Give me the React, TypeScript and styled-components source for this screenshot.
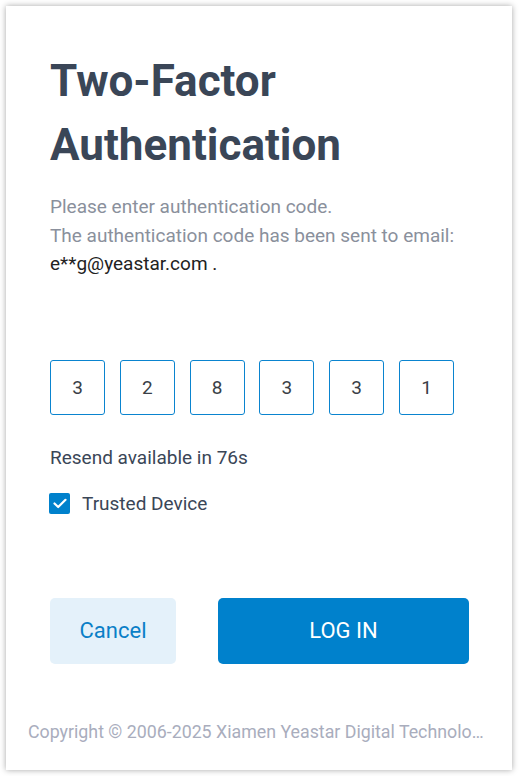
import React from "react";
import styled, { createGlobalStyle } from "styled-components";

const Global = createGlobalStyle`
  html, body { margin: 0; padding: 0; background: #ffffff; }
  body { font-family: Roboto, "Liberation Sans", sans-serif; }
  * { box-sizing: border-box; }
`;

const Page = styled.div`
  padding: 6px 7px 6px 6px;
  width: 519px;
`;

const Card = styled.div`
  width: 506px;
  height: 764px;
  background: #fff;
  box-shadow: 0 0 6px rgba(0, 0, 0, 0.35);
  padding: 43px 43px 0 44px;
  display: flex;
  flex-direction: column;
`;

const Title = styled.h1`
  margin: 0;
  font-size: 44px;
  line-height: 64px;
  font-weight: 700;
  color: #3a4657;
`;

const Desc = styled.div`
  margin-top: 16px;
  font-size: 19px;
  line-height: 28.5px;
  color: #8a909c;
`;

const Email = styled.div`
  color: #222;
`;

const Codes = styled.div`
  margin-top: 81px;
  display: flex;
  gap: 14.8px;
`;

const CodeBox = styled.div`
  width: 55px;
  height: 55px;
  border: 1px solid #0a84cf;
  border-radius: 3px;
  display: flex;
  align-items: center;
  justify-content: center;
  font-size: 19px;
  color: #3a3f47;
`;

const Resend = styled.div`
  margin-top: 31px;
  font-size: 19px;
  line-height: 24px;
  color: #3a4657;
`;

const CheckRow = styled.label`
  margin-top: 23px;
  display: flex;
  align-items: center;
  gap: 12px;
  font-size: 19px;
  line-height: 21px;
  color: #3a4657;
`;

const Check = styled.span`
  width: 21px;
  height: 21px;
  margin-left: -1px;
  border-radius: 2px;
  background: #0081cc;
  display: flex;
  align-items: center;
  justify-content: center;
`;

const Buttons = styled.div`
  margin-top: 84px;
  display: flex;
  gap: 42px;
`;

const Button = styled.button<{ $primary?: boolean }>`
  height: 66px;
  width: ${(p) => (p.$primary ? "251px" : "126px")};
  border: none;
  border-radius: 5px;
  font-family: Roboto, "Liberation Sans", sans-serif;
  font-size: 22px;
  background: ${(p) => (p.$primary ? "#0081cc" : "#e4f1fa")};
  color: ${(p) => (p.$primary ? "#ffffff" : "#0a7fc7")};
  padding: 0;
`;

const Footer = styled.div`
  margin: auto -20px 0 -22px;
  padding-bottom: 28px;
  font-size: 17.8px;
  line-height: 21px;
  color: #a9adbd;
  white-space: nowrap;
  overflow: hidden;
  text-overflow: ellipsis;
`;

export default function App() {
  const code = ["3", "2", "8", "3", "3", "1"];
  return (
    <Page>
      <Global />
      <Card>
        <Title>
          Two-Factor
          <br />
          Authentication
        </Title>
        <Desc>
          Please enter authentication code.
          <br />
          The authentication code has been sent to email:
          <Email>e**g@yeastar.com .</Email>
        </Desc>
        <Codes>
          {code.map((c, i) => (
            <CodeBox key={i}>{c}</CodeBox>
          ))}
        </Codes>
        <Resend>Resend available in 76s</Resend>
        <CheckRow>
          <Check>
            <svg width="14" height="11" viewBox="0 0 14 11">
              <path d="M1.5 5.5 L5.2 9 L12.5 1.8" fill="none" stroke="#fff" strokeWidth="2.2" strokeLinecap="round" strokeLinejoin="round" />
            </svg>
          </Check>
          Trusted Device
        </CheckRow>
        <Buttons>
          <Button>Cancel</Button>
          <Button $primary>LOG IN</Button>
        </Buttons>
        <Footer>Copyright © 2006-2025 Xiamen Yeastar Digital Technology Co., Ltd. All Rights Reserved.</Footer>
      </Card>
    </Page>
  );
}
